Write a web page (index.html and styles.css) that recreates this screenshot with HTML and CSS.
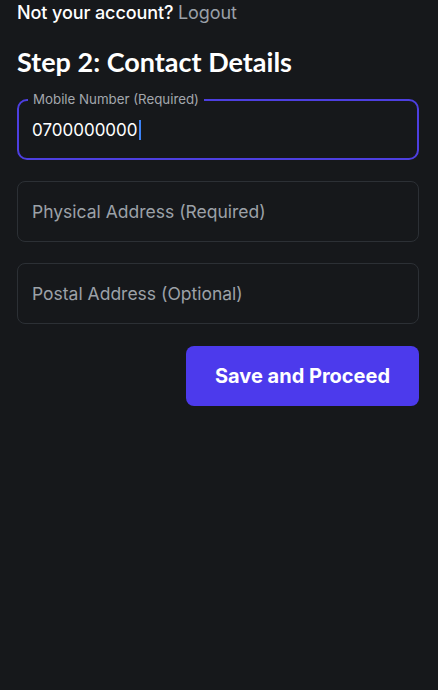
FILE: index.html
```html
<!DOCTYPE html>
<html lang="en">
<head>
<meta charset="utf-8">
<title>Contact Details</title>
<link rel="stylesheet" href="styles.css">
</head>
<body>
<main class="page">
  <p class="account">Not your account? <a class="logout" href="#">Logout</a></p>
  <h1 class="title">Step 2: Contact Details</h1>
  <form class="form">
    <div class="field field-active">
      <label class="float-label">Mobile Number (Required)</label>
      <span class="value">0700000000</span><span class="caret"></span>
    </div>
    <div class="field">
      <span class="placeholder">Physical Address (Required)</span>
    </div>
    <div class="field">
      <span class="placeholder">Postal Address (Optional)</span>
    </div>
    <div class="actions">
      <button type="button" class="btn">Save and Proceed</button>
    </div>
  </form>
</main>
</body>
</html>
```
FILE: styles.css
```css
html, body {
  margin: 0;
  padding: 0;
  background: #16181b;
  height: 100%;
}
body {
  font-family: "Lato", "Inter", sans-serif;
  color: #ffffff;
}
.page {
  padding: 0 19px 0 17px;
}
.account {
  margin: 0;
  padding-top: 1px;
  font-family: "Inter", sans-serif;
  font-size: 18px;
  line-height: 24px;
  font-weight: 500;
  letter-spacing: -0.1px;
}
.logout {
  color: #9aa0a8;
  text-decoration: none;
  font-weight: 400;
}
.title {
  margin: 21px 0 0;
  font-size: 27px;
  line-height: 32px;
  font-weight: 700;
}
.form {
  margin-top: 21px;
  display: flex;
  flex-direction: column;
  gap: 21px;
}
.field {
  position: relative;
  box-sizing: border-box;
  height: 61px;
  border: 1px solid #2c3035;
  border-radius: 8px;
  display: flex;
  align-items: center;
  padding-left: 14px;
  font-family: "Inter", sans-serif;
  font-size: 17.5px;
}
.field-active {
  border: 2px solid #4d3fe0;
  border-radius: 10px;
  padding-left: 13px;
}
.float-label {
  position: absolute;
  left: 9px;
  top: -10px;
  padding: 0 5px;
  background: #16181b;
  font-size: 13.3px;
  line-height: 16px;
  color: #a3a7ad;
}
.value {
  color: #ffffff;
  font-size: 17px;
}
.caret {
  display: inline-block;
  width: 2px;
  height: 20px;
  background: #3b82f6;
  margin-left: 1px;
}
.placeholder {
  color: #9ca1a8;
}
.actions {
  display: flex;
  justify-content: flex-end;
  padding-top: 1px;
}
.btn {
  width: 233px;
  height: 60px;
  border: none;
  border-radius: 8px;
  background: #4c3aec;
  color: #ffffff;
  font-family: "Inter", sans-serif;
  font-size: 20px;
  font-weight: 700;
  cursor: pointer;
}
```
